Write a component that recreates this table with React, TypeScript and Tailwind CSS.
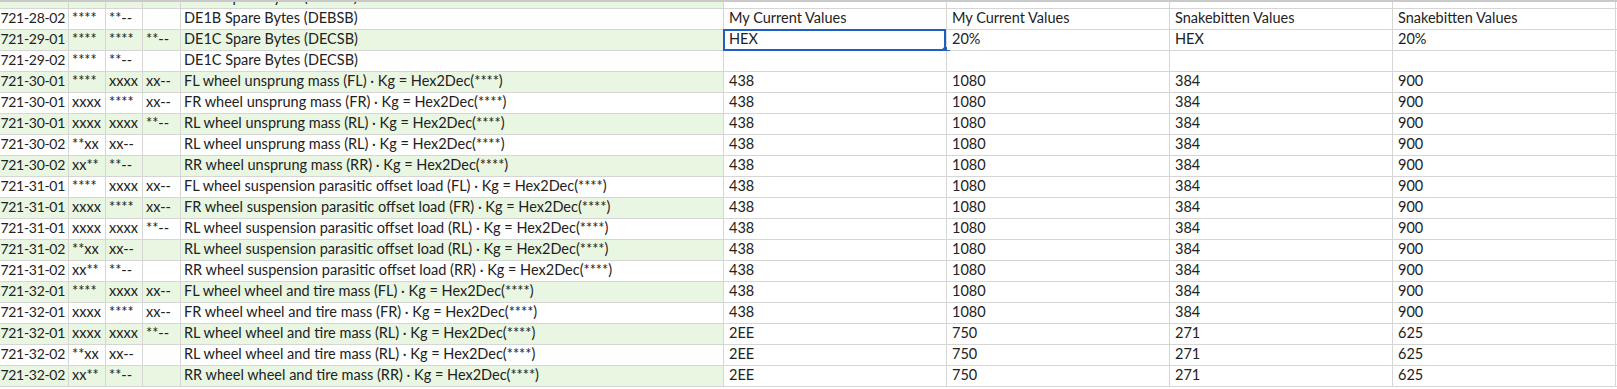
import React from 'react';

type Row = {
  id: string;
  b: string;
  c: string;
  d: string;
  label: string;
  vals: string[];
};

const widths = ['w-[69px]', 'w-[37px]', 'w-[37px]', 'w-[38px]', 'w-[543px]'];

const wheelRows = (
  base: string,
  noun: string,
  vals: string[][]
): Row[] => [
  { id: `${base}-01`, b: '****', c: 'xxxx', d: 'xx--', label: `FL wheel ${noun} (FL) · Kg = Hex2Dec(****)`, vals: vals[0] },
  { id: `${base}-01`, b: 'xxxx', c: '****', d: 'xx--', label: `FR wheel ${noun} (FR) · Kg = Hex2Dec(****)`, vals: vals[1] },
  { id: `${base}-01`, b: 'xxxx', c: 'xxxx', d: '**--', label: `RL wheel ${noun} (RL) · Kg = Hex2Dec(****)`, vals: vals[2] },
  { id: `${base}-02`, b: '**xx', c: 'xx--', d: '', label: `RL wheel ${noun} (RL) · Kg = Hex2Dec(****)`, vals: vals[3] },
  { id: `${base}-02`, b: 'xx**', c: '**--', d: '', label: `RR wheel ${noun} (RR) · Kg = Hex2Dec(****)`, vals: vals[4] },
];

const big = ['438', '1080', '384', '900'];
const small = ['2EE', '750', '271', '625'];

const rows: Row[] = [
  { id: '721-28-02', b: '****', c: '**--', d: '', label: 'DE1B Spare Bytes (DEBSB)', vals: ['My Current Values', 'My Current Values', 'Snakebitten Values', 'Snakebitten Values'] },
  { id: '721-29-01', b: '****', c: '****', d: '**--', label: 'DE1C Spare Bytes (DECSB)', vals: ['HEX', '20%', 'HEX', '20%'] },
  { id: '721-29-02', b: '****', c: '**--', d: '', label: 'DE1C Spare Bytes (DECSB)', vals: ['', '', '', ''] },
  ...wheelRows('721-30', 'unsprung mass', [big, big, big, big, big]),
  ...wheelRows('721-31', 'suspension parasitic offset load', [big, big, big, big, big]),
  ...wheelRows('721-32', 'wheel and tire mass', [big, big, small, small, small]),
];

const SheetRow: React.FC<{ row: Row; banded: boolean; selected?: boolean }> = ({ row, banded, selected }) => {
  const tint = banded ? 'bg-[#e9f6e2]' : 'bg-white';
  const left = [row.id, row.b, row.c, row.d, row.label];
  return (
    <div className="flex h-[21px] border-b border-[#d6d6d6]">
      {left.map((text, i) => (
        <div
          key={i}
          className={`${widths[i]} ${tint} shrink-0 border-r border-[#d6d6d6] overflow-hidden whitespace-nowrap leading-[17px] ${
            i === 0 ? 'flex justify-end pr-[3px] text-[14px] tracking-[-0.3px]' : 'pl-[3px]'
          }`}
        >
          {i === 0 ? <span className="shrink-0">{text}</span> : text}
        </div>
      ))}
      {row.vals.map((v, i) => (
        <div
          key={`v${i}`}
          className="relative w-[223px] shrink-0 bg-white border-r border-[#d6d6d6] pl-[5px] whitespace-nowrap leading-[17px]"
        >
          {v}
          {selected && i === 0 && (
            <>
              <div className="absolute -left-[1px] -top-[1px] right-0 -bottom-[1px] border-2 border-[#1f5fc0]" />
              <div className="absolute -right-[4px] -bottom-[5px] w-[8px] h-[8px] rounded-full bg-[#1f5fc0]" />
            </>
          )}
        </div>
      ))}
    </div>
  );
};

export default function App() {
  const partial: Row = { id: '721-28-01', b: '', c: '', d: '', label: 'DE1B Spare Bytes (DEBSB)', vals: ['', '', '', ''] };
  return (
    <div
      className="w-[1617px] h-[389px] overflow-hidden bg-white text-[14.5px] text-[#222]"
      style={{ fontFamily: 'Lato, "Open Sans", sans-serif' }}
    >
      <div className="border-t-2 border-[#c9c9c9]">
        <div className="h-[7px] overflow-hidden">
          <div className="-mt-[14px]">
            <SheetRow row={partial} banded />
          </div>
        </div>
        {rows.map((r, i) => (
          <SheetRow key={i} row={r} banded={i % 2 === 1} selected={i === 1} />
        ))}
      </div>
    </div>
  );
}
